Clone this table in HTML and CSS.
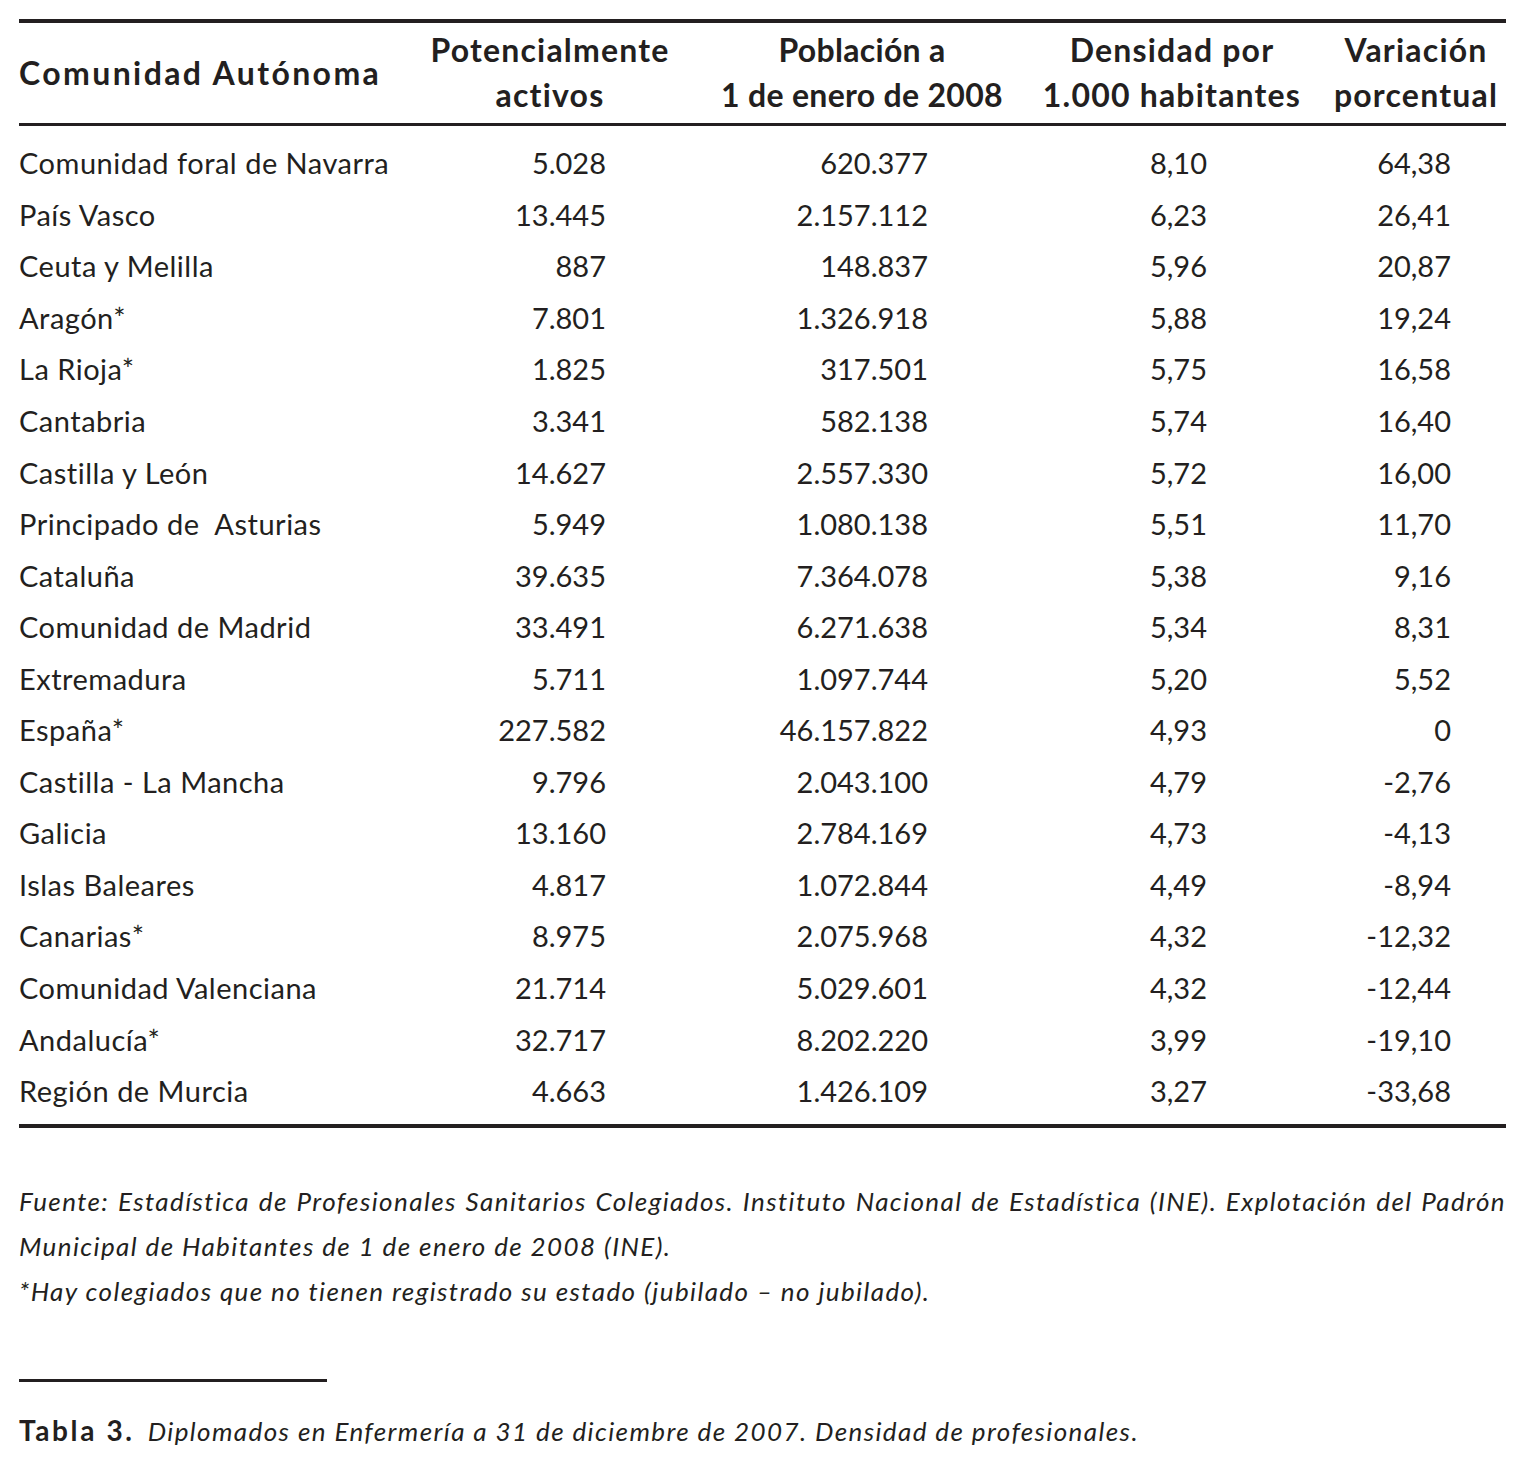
FILE: index.html
```html
<!DOCTYPE html>
<html lang="es">
<head>
<meta charset="utf-8">
<title>Tabla 3</title>
<link rel="stylesheet" href="styles.css">
</head>
<body>
<div class="page">
  <div class="table">
    <div class="row head">
      <div class="c c1">Comunidad Autónoma</div>
      <div class="c c2">Potencialmente<br>activos</div>
      <div class="c c3">Población a<br>1 de enero de 2008</div>
      <div class="c c4">Densidad por<br>1.000 habitantes</div>
      <div class="c c5">Variación<br>porcentual</div>
    </div>
    <div class="body">
      <div class="row"><div class="c c1">Comunidad foral de Navarra</div><div class="c c2">5.028</div><div class="c c3">620.377</div><div class="c c4">8,10</div><div class="c c5">64,38</div></div>
      <div class="row"><div class="c c1">País Vasco</div><div class="c c2">13.445</div><div class="c c3">2.157.112</div><div class="c c4">6,23</div><div class="c c5">26,41</div></div>
      <div class="row"><div class="c c1">Ceuta y Melilla</div><div class="c c2">887</div><div class="c c3">148.837</div><div class="c c4">5,96</div><div class="c c5">20,87</div></div>
      <div class="row"><div class="c c1">Aragón*</div><div class="c c2">7.801</div><div class="c c3">1.326.918</div><div class="c c4">5,88</div><div class="c c5">19,24</div></div>
      <div class="row"><div class="c c1">La Rioja*</div><div class="c c2">1.825</div><div class="c c3">317.501</div><div class="c c4">5,75</div><div class="c c5">16,58</div></div>
      <div class="row"><div class="c c1">Cantabria</div><div class="c c2">3.341</div><div class="c c3">582.138</div><div class="c c4">5,74</div><div class="c c5">16,40</div></div>
      <div class="row"><div class="c c1">Castilla y León</div><div class="c c2">14.627</div><div class="c c3">2.557.330</div><div class="c c4">5,72</div><div class="c c5">16,00</div></div>
      <div class="row"><div class="c c1">Principado de&nbsp; Asturias</div><div class="c c2">5.949</div><div class="c c3">1.080.138</div><div class="c c4">5,51</div><div class="c c5">11,70</div></div>
      <div class="row"><div class="c c1">Cataluña</div><div class="c c2">39.635</div><div class="c c3">7.364.078</div><div class="c c4">5,38</div><div class="c c5">9,16</div></div>
      <div class="row"><div class="c c1">Comunidad de Madrid</div><div class="c c2">33.491</div><div class="c c3">6.271.638</div><div class="c c4">5,34</div><div class="c c5">8,31</div></div>
      <div class="row"><div class="c c1">Extremadura</div><div class="c c2">5.711</div><div class="c c3">1.097.744</div><div class="c c4">5,20</div><div class="c c5">5,52</div></div>
      <div class="row"><div class="c c1">España*</div><div class="c c2">227.582</div><div class="c c3">46.157.822</div><div class="c c4">4,93</div><div class="c c5">0</div></div>
      <div class="row"><div class="c c1">Castilla - La Mancha</div><div class="c c2">9.796</div><div class="c c3">2.043.100</div><div class="c c4">4,79</div><div class="c c5">-2,76</div></div>
      <div class="row"><div class="c c1">Galicia</div><div class="c c2">13.160</div><div class="c c3">2.784.169</div><div class="c c4">4,73</div><div class="c c5">-4,13</div></div>
      <div class="row"><div class="c c1">Islas Baleares</div><div class="c c2">4.817</div><div class="c c3">1.072.844</div><div class="c c4">4,49</div><div class="c c5">-8,94</div></div>
      <div class="row"><div class="c c1">Canarias*</div><div class="c c2">8.975</div><div class="c c3">2.075.968</div><div class="c c4">4,32</div><div class="c c5">-12,32</div></div>
      <div class="row"><div class="c c1">Comunidad Valenciana</div><div class="c c2">21.714</div><div class="c c3">5.029.601</div><div class="c c4">4,32</div><div class="c c5">-12,44</div></div>
      <div class="row"><div class="c c1">Andalucía*</div><div class="c c2">32.717</div><div class="c c3">8.202.220</div><div class="c c4">3,99</div><div class="c c5">-19,10</div></div>
      <div class="row"><div class="c c1">Región de Murcia</div><div class="c c2">4.663</div><div class="c c3">1.426.109</div><div class="c c4">3,27</div><div class="c c5">-33,68</div></div>
    </div>
  </div>
  <div class="notes">
    <p class="just">Fuente: Estadística de Profesionales Sanitarios Colegiados. Instituto Nacional de Estadística (INE). Explotación del Padrón Municipal de Habitantes de 1 de enero de 2008 (INE).</p>
    <p>*Hay colegiados que no tienen registrado su estado (jubilado – no jubilado).</p>
  </div>
  <div class="short-rule"></div>
  <p class="caption"><b>Tabla 3.</b>&nbsp;&nbsp;<i>Diplomados en Enfermería a 31 de diciembre de 2007. Densidad de profesionales.</i></p>
</div>
</body>
</html>
```

FILE: styles.css
```css
html, body {
  margin: 0;
  padding: 0;
  background: #ffffff;
}
body {
  font-family: "Lato", "Open Sans", sans-serif;
  color: #231f20;
}
.page {
  padding: 19px 10px 0 19px;
  width: 1487px;
}
.table {
  border-top: 4px solid #231f20;
  border-bottom: 4px solid #231f20;
}
.row {
  display: grid;
  grid-template-columns: 401px 260px 360px 264px 202px;
  align-items: center;
}
.head {
  font-weight: 700;
  font-size: 32px;
  letter-spacing: 1.2px;
  line-height: 45px;
  padding: 4px 0 6px;
  border-bottom: 3px solid #231f20;
}
.head .c { text-align: center; white-space: nowrap; }
.head .c1 { text-align: left; letter-spacing: 2.4px; }
.head .c3 { letter-spacing: 0.3px; padding-left: 4px; }
.head .c5 { padding-left: 22px; }
.body {
  padding: 11px 0 8px;
  font-size: 29px;
}
.body .row {
  height: 51.55px;
}
.body .c { text-align: right; }
.body .c1 { text-align: left; letter-spacing: 0.5px; }
.body .c2 { padding-right: 74px; }
.body .c3 { padding-right: 112px; }
.body .c4 { padding-right: 97px; }
.body .c5 { padding-right: 55px; }
.notes {
  margin-top: 51px;
  font-style: italic;
  font-size: 26px;
  letter-spacing: 1.4px;
  line-height: 45px;
}
.notes p { margin: 0; }
.just { text-align: justify; }
.short-rule {
  width: 308px;
  height: 3px;
  background: #231f20;
  margin-top: 65px;
}
.caption {
  margin: 28px 0 0;
  font-size: 26px;
  line-height: 40px;
}
.caption b {
  font-weight: 700;
  font-size: 28px;
  letter-spacing: 2.6px;
}
.caption i {
  letter-spacing: 1.4px;
}
```
